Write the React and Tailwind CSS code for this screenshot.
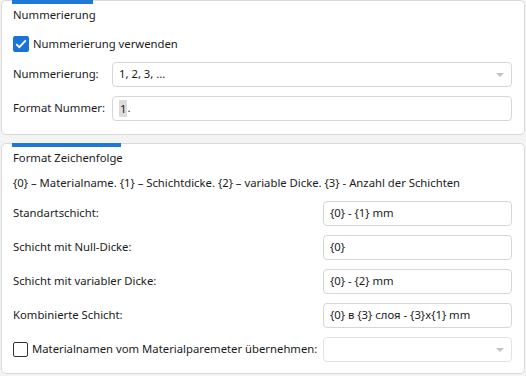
import React from 'react';

const font = { fontFamily: '"Noto Sans", "Open Sans", sans-serif' };

const Arrow = () => (
  <svg width="8" height="4" viewBox="0 0 8 4" className="absolute right-[7px] top-[10px]">
    <path d="M0 0 L8 0 L4 4 Z" fill="#c4c4c4" />
  </svg>
);

const Field = ({ children, select, disabled, className = '' }) => (
  <div
    className={`relative h-[25px] flex items-center px-[6px] rounded-[4px] border bg-white text-[11.3px] text-[#1b1b1b] ${
      disabled ? 'border-[#e3e3e3]' : 'border-[#d6d6d6]'
    } ${className}`}
  >
    {children}
    {select && <Arrow />}
  </div>
);

const Row = ({ label, inputLeft, children }) => (
  <div className="flex items-center">
    <div className="text-[11.3px] text-[#1b1b1b] shrink-0 whitespace-nowrap" style={{ width: inputLeft }}>
      {label}
    </div>
    <div className="flex-1">{children}</div>
  </div>
);

const Panel = ({ title, barWidth, children, className = '' }) => (
  <div className={`relative bg-white border border-[#dadada] rounded-[5px] pl-[11px] pr-[12px] ${className}`}>
    <div className="absolute left-[10px] -top-[1px] h-[4px] bg-[#1e78d7]" style={{ width: barWidth }} />
    <div className="h-[16px] leading-[16px] text-[11.3px] text-[#1b1b1b]">{title}</div>
    {children}
  </div>
);

export default function App() {
  return (
    <div className="w-[526px] h-[376px] bg-[#f3f3f3] px-[1px] flex flex-col gap-[8px] overflow-hidden" style={font}>
      <Panel title="Nummerierung" barWidth={81} className="pt-[6px] pb-[13px]">
        <div className="mt-[13px] h-[16px] flex items-center">
          <div className="w-[16px] h-[16px] rounded-[2px] bg-[#1a73d9] flex items-center justify-center">
            <svg width="12" height="10" viewBox="0 0 12 10">
              <path d="M1.2 5.2 L4.3 8.2 L10.8 1.4" fill="none" stroke="white" strokeWidth="1.8" />
            </svg>
          </div>
          <span className="ml-[4px] text-[11.3px] text-[#1b1b1b]">Nummerierung verwenden</span>
        </div>
        <div className="mt-[10px] flex flex-col gap-[9px]">
          <Row label="Nummerierung:" inputLeft={99}>
            <Field select>1, 2, 3, ...</Field>
          </Row>
          <Row label="Format Nummer:" inputLeft={99}>
            <Field className="px-[2px]">
              <span className="bg-[#dcdcdc] px-[1px] leading-[17px]">1</span>
              <span>.</span>
            </Field>
          </Row>
        </div>
      </Panel>

      <Panel title="Format Zeichenfolge" barWidth={109} className="pt-[6px] pb-[11px]">
        <div className="mt-[9px] h-[16px] leading-[16px] text-[11.3px] text-[#1b1b1b] whitespace-nowrap">
          {'{0} – Materialname. {1} – Schichtdicke. {2} – variable Dicke. {3} - Anzahl der Schichten'}
        </div>
        <div className="mt-[10px] flex flex-col gap-[9px]">
          <Row label="Standartschicht:" inputLeft={310}>
            <Field>{'{0} - {1} mm'}</Field>
          </Row>
          <Row label="Schicht mit Null-Dicke:" inputLeft={310}>
            <Field>{'{0}'}</Field>
          </Row>
          <Row label="Schicht mit variabler Dicke:" inputLeft={310}>
            <Field>{'{0} - {2} mm'}</Field>
          </Row>
          <Row label="Kombinierte Schicht:" inputLeft={310}>
            <Field>{'{0} в {3} слоя - {3}x{1} mm'}</Field>
          </Row>
          <div className="flex items-center">
            <div className="w-[310px] flex items-center shrink-0">
              <div className="w-[15px] h-[15px] border border-[#333] rounded-[2px] bg-white" />
              <span className="ml-[4px] text-[11.3px] text-[#1b1b1b] whitespace-nowrap">
                Materialnamen vom Materialparemeter übernehmen:
              </span>
            </div>
            <div className="flex-1">
              <Field select disabled />
            </div>
          </div>
        </div>
      </Panel>
    </div>
  );
}
